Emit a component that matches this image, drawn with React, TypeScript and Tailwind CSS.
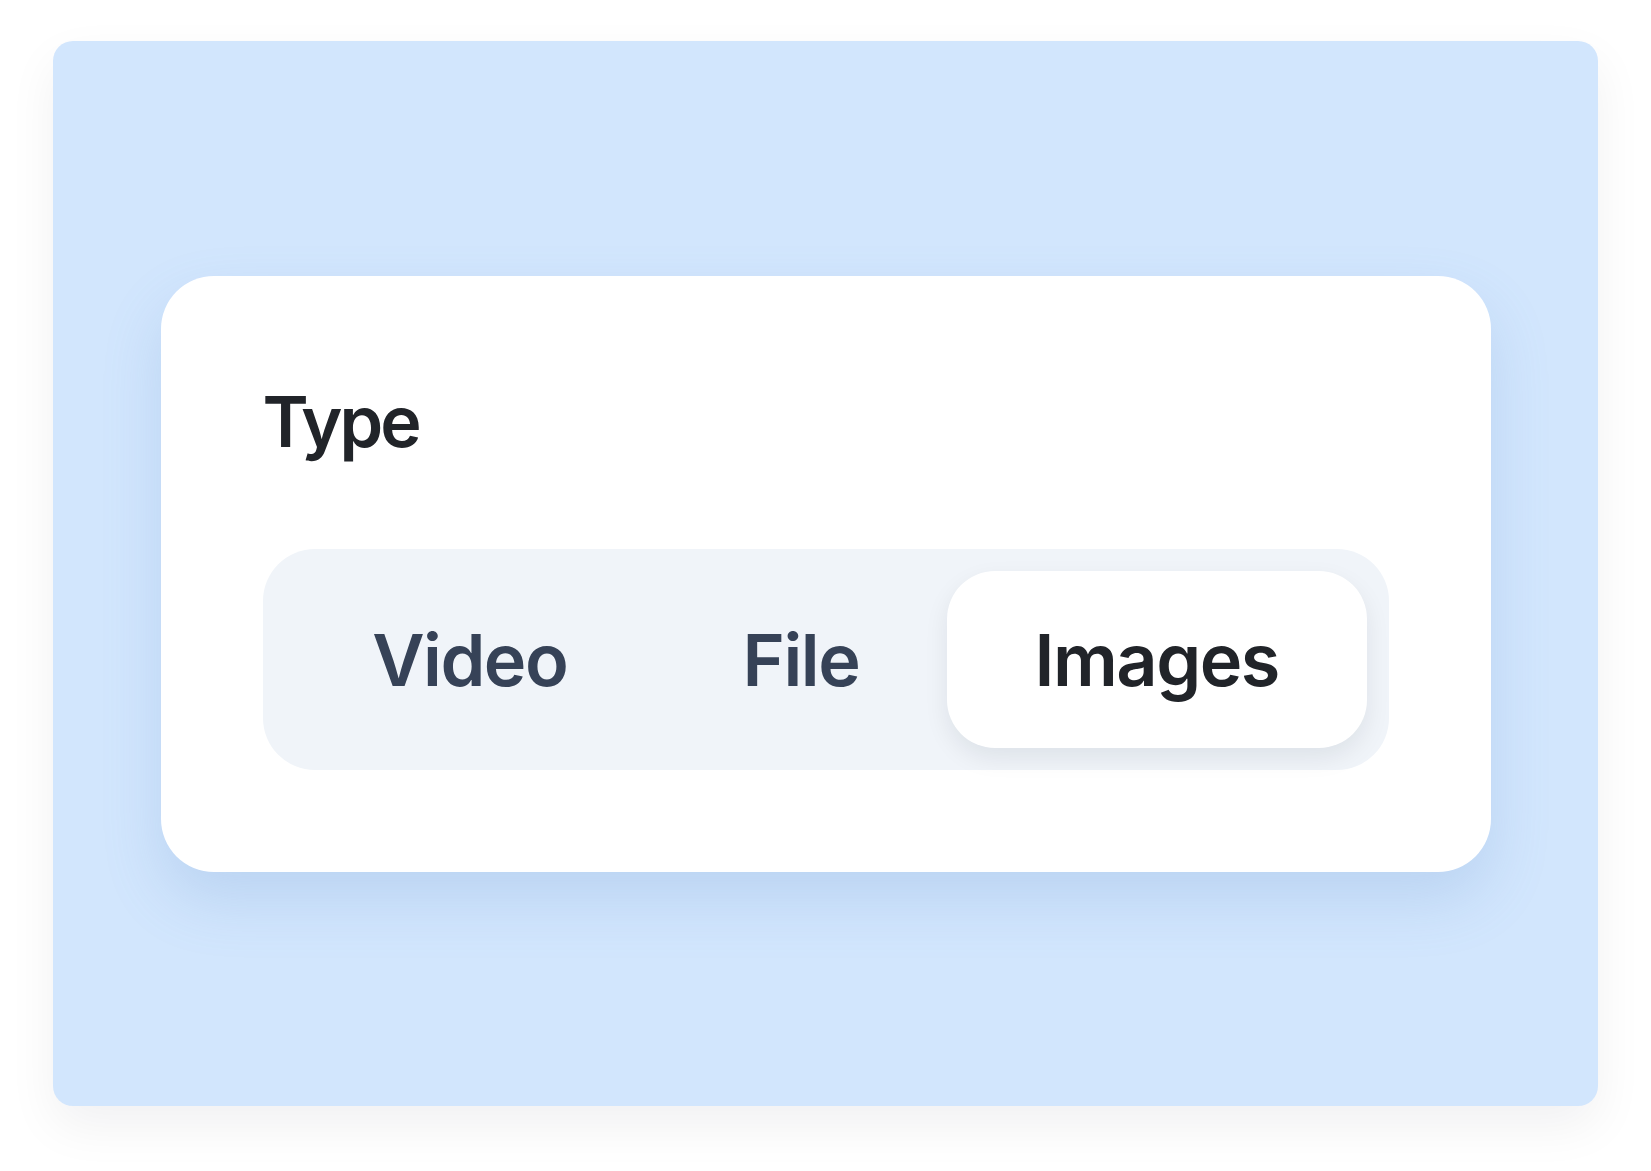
import React, { useState } from 'react';

const tabs = ['Video', 'File', 'Images'];

export default function App() {
  const [active, setActive] = useState('Images');

  return (
    <div className="min-h-screen w-full bg-white px-[53px] pt-[41px] pb-[65px] font-['Inter','Noto_Sans',sans-serif]">
      <div className="flex h-[1065px] w-full items-center justify-center rounded-[20px] bg-[#d2e6fd] shadow-[0_20px_50px_rgba(15,23,42,0.06)]">
        {/* Card */}
        <div className="w-[1330px] rounded-[53px] bg-white p-[102px] shadow-[0_28px_60px_rgba(96,140,200,0.2)]">
          <h2 className="mb-[84px] text-[70px] font-semibold leading-[87px] tracking-[-3px] text-[#212429]">Type</h2>

          <div className="flex rounded-[52px] bg-[#f0f4f9] p-[22px]">
            {tabs.map((tab) => {
              const selected = tab === active;
              return (
                <button
                  key={tab}
                  onClick={() => setActive(tab)}
                  className={
                    selected
                      ? 'grow rounded-[48px] bg-white py-[45px] text-[72px] font-semibold leading-[87px] tracking-[-1.5px] text-[#212429] shadow-[0_10px_24px_rgba(15,23,42,0.08)]'
                      : 'grow rounded-[48px] py-[45px] text-[72px] font-semibold leading-[87px] tracking-[-1.5px] text-[#364257]'
                  }
                >
                  {tab}
                </button>
              );
            })}
          </div>
        </div>
      </div>
    </div>
  );
}
